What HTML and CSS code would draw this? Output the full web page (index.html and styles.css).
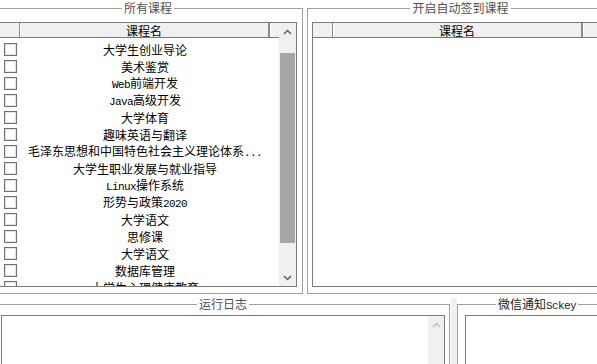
FILE: index.html
```html
<!DOCTYPE html>
<html lang="zh-CN">
<head>
<meta charset="utf-8">
<title>自动签到</title>
<link rel="stylesheet" href="styles.css">
</head>
<body>
<div class="app">
  <div class="top">
    <fieldset class="gb gb-all">
      <legend>所有课程</legend>
      <div class="lv lv-left">
        <div class="lv-main">
          <div class="lv-head">
            <div class="hc hc-chk"></div>
            <div class="hc hc-name">课程名</div>
            <div class="hc hc-rest"></div>
          </div>
          <div class="lv-body">
            <div class="row"><span class="cell-chk"><span class="chk"></span></span><span class="name">大学生创业导论</span></div>
            <div class="row"><span class="cell-chk"><span class="chk"></span></span><span class="name">美术鉴赏</span></div>
            <div class="row"><span class="cell-chk"><span class="chk"></span></span><span class="name"><span class="en">Web</span>前端开发</span></div>
            <div class="row"><span class="cell-chk"><span class="chk"></span></span><span class="name"><span class="en">Java</span>高级开发</span></div>
            <div class="row"><span class="cell-chk"><span class="chk"></span></span><span class="name">大学体育</span></div>
            <div class="row"><span class="cell-chk"><span class="chk"></span></span><span class="name">趣味英语与翻译</span></div>
            <div class="row"><span class="cell-chk"><span class="chk"></span></span><span class="name">毛泽东思想和中国特色社会主义理论体系<span class="en">...</span></span></div>
            <div class="row"><span class="cell-chk"><span class="chk"></span></span><span class="name">大学生职业发展与就业指导</span></div>
            <div class="row"><span class="cell-chk"><span class="chk"></span></span><span class="name"><span class="en">Linux</span>操作系统</span></div>
            <div class="row"><span class="cell-chk"><span class="chk"></span></span><span class="name">形势与政策<span class="en">2020</span></span></div>
            <div class="row"><span class="cell-chk"><span class="chk"></span></span><span class="name">大学语文</span></div>
            <div class="row"><span class="cell-chk"><span class="chk"></span></span><span class="name">思修课</span></div>
            <div class="row"><span class="cell-chk"><span class="chk"></span></span><span class="name">大学语文</span></div>
            <div class="row"><span class="cell-chk"><span class="chk"></span></span><span class="name">数据库管理</span></div>
            <div class="row"><span class="cell-chk"><span class="chk"></span></span><span class="name">大学生心理健康教育</span></div>
          </div>
        </div>
        <div class="vscroll">
          <div class="sbtn"><svg width="9" height="6" viewBox="0 0 9 6"><polyline points="1,5 4.5,1.5 8,5" fill="none" stroke="#606060" stroke-width="1.5"/></svg></div>
          <div class="track"><div class="thumb"></div></div>
          <div class="sbtn"><svg width="9" height="6" viewBox="0 0 9 6"><polyline points="1,1 4.5,4.5 8,1" fill="none" stroke="#606060" stroke-width="1.5"/></svg></div>
        </div>
      </div>
    </fieldset>
    <fieldset class="gb gb-auto">
      <legend>开启自动签到课程</legend>
      <div class="lv lv-right">
        <div class="lv-main">
          <div class="lv-head">
            <div class="hc hc-chk"></div>
            <div class="hc hc-name">课程名</div>
            <div class="hc hc-rest"></div>
          </div>
          <div class="lv-body"></div>
        </div>
      </div>
    </fieldset>
  </div>
  <div class="bottom">
    <fieldset class="gb gb-log">
      <legend>运行日志</legend>
      <div class="tb tb-log">
        <div class="tb-area"></div>
        <div class="vscroll light">
          <div class="sbtn"><svg width="9" height="6" viewBox="0 0 9 6"><polyline points="1,5 4.5,1.5 8,5" fill="none" stroke="#bdbdbd" stroke-width="1.5"/></svg></div>
        </div>
      </div>
    </fieldset>
    <div class="splitter"></div>
    <fieldset class="gb gb-key">
      <legend class="dark">微信通知<span class="en">Sckey</span></legend>
      <div class="tb tb-key"></div>
    </fieldset>
  </div>
</div>
</body>
</html>
```
FILE: styles.css
```css
html, body {
  margin: 0;
  padding: 0;
  background: #ffffff;
}
body {
  width: 597px;
  height: 364px;
  overflow: hidden;
  font-family: "Noto Sans CJK SC", "Noto Sans", sans-serif;
  font-size: 12px;
  color: #000;
}
.app {
  width: 597px;
  height: 364px;
  overflow: hidden;
}
.en {
  font-family: "Liberation Mono", "DejaVu Sans Mono", monospace;
  font-size: 11px;
  letter-spacing: -0.6px;
}

/* group boxes */
.gb {
  margin: 0;
  border: 1px solid #a0a0a0;
  box-sizing: border-box;
  min-width: 0;
  flex-shrink: 0;
}
.gb legend {
  margin: 0 auto;
  padding: 0 2px;
  font-size: 12px;
  line-height: 16px;
  height: 16px;
  color: #505050;
  white-space: nowrap;
}
.gb legend.dark {
  color: #1a1a1a;
}

.top {
  display: flex;
}
.gb-all {
  margin-left: -6px;
  width: 309px;
  padding: 0 5px 6px 4px;
}
.gb-auto {
  margin-left: 4px;
  width: 307px;
  padding: 0 4px 6px 4px;
}

/* list view */
.lv {
  margin-top: 6px;
  height: 265px;
  border: 1px solid #7c7c7c;
  box-sizing: border-box;
  display: flex;
  background: #fff;
}
.lv-main {
  flex: 1;
  min-width: 0;
  overflow: hidden;
}
.lv-head {
  display: flex;
  height: 15px;
  border-bottom: 1px solid #7a7a7a;
  box-sizing: border-box;
  background: #f0f0f0;
}
.hc {
  height: 14px;
  line-height: 14px;
  box-sizing: border-box;
  background: #f0f0f0;
  box-shadow: inset 1px 0 #ffffff;
  text-align: center;
  font-size: 12px;
  white-space: nowrap;
}
.hc-chk {
  width: 20px;
  border-right: 1px solid #8a8a8a;
  box-shadow: none;
}
.hc-name {
  width: 250px;
  border-right: 2px solid #8a8a8a;
  padding-top: 1px;
}
.hc-rest {
  flex: 1;
}
.lv-body {
  padding-top: 3px;
}
.row {
  display: flex;
  align-items: center;
  height: 17px;
  white-space: nowrap;
}
.cell-chk {
  width: 20px;
  flex-shrink: 0;
  display: flex;
  align-items: center;
}
.chk {
  margin-left: 4px;
  width: 13px;
  height: 13px;
  box-sizing: border-box;
  border: 1px solid #707070;
  box-shadow: inset 0 0 0 1px #e2e2e2;
  background: #fff;
}
.name {
  width: 250px;
  flex-shrink: 0;
  text-align: center;
  line-height: 17px;
}

/* scrollbars */
.vscroll {
  width: 17px;
  flex-shrink: 0;
  background: #f0f0f0;
  display: flex;
  flex-direction: column;
}
.sbtn {
  height: 17px;
  flex-shrink: 0;
  display: flex;
  align-items: center;
  justify-content: center;
}
.track {
  flex: 1;
  padding: 13px 1px 0 1px;
}
.thumb {
  height: 190px;
  background: #a6a6a6;
}

/* bottom */
.bottom {
  display: flex;
  margin-top: 2px;
}
.gb-log {
  margin-left: -3px;
  width: 453px;
  height: 100px;
  padding: 0 4px 0 3px;
}
.splitter {
  margin-left: 1px;
  margin-top: 2px;
  width: 6px;
  height: 80px;
  background: #f0f0f0;
  flex-shrink: 0;
}
.gb-key {
  width: 160px;
  height: 100px;
  padding: 0 7px;
}
.tb {
  margin-top: 3px;
  height: 70px;
  border: 1px solid #7a7a7a;
  box-sizing: border-box;
  background: #fff;
  display: flex;
}
.tb-area {
  flex: 1;
}
.vscroll.light {
  width: 16px;
}
```
